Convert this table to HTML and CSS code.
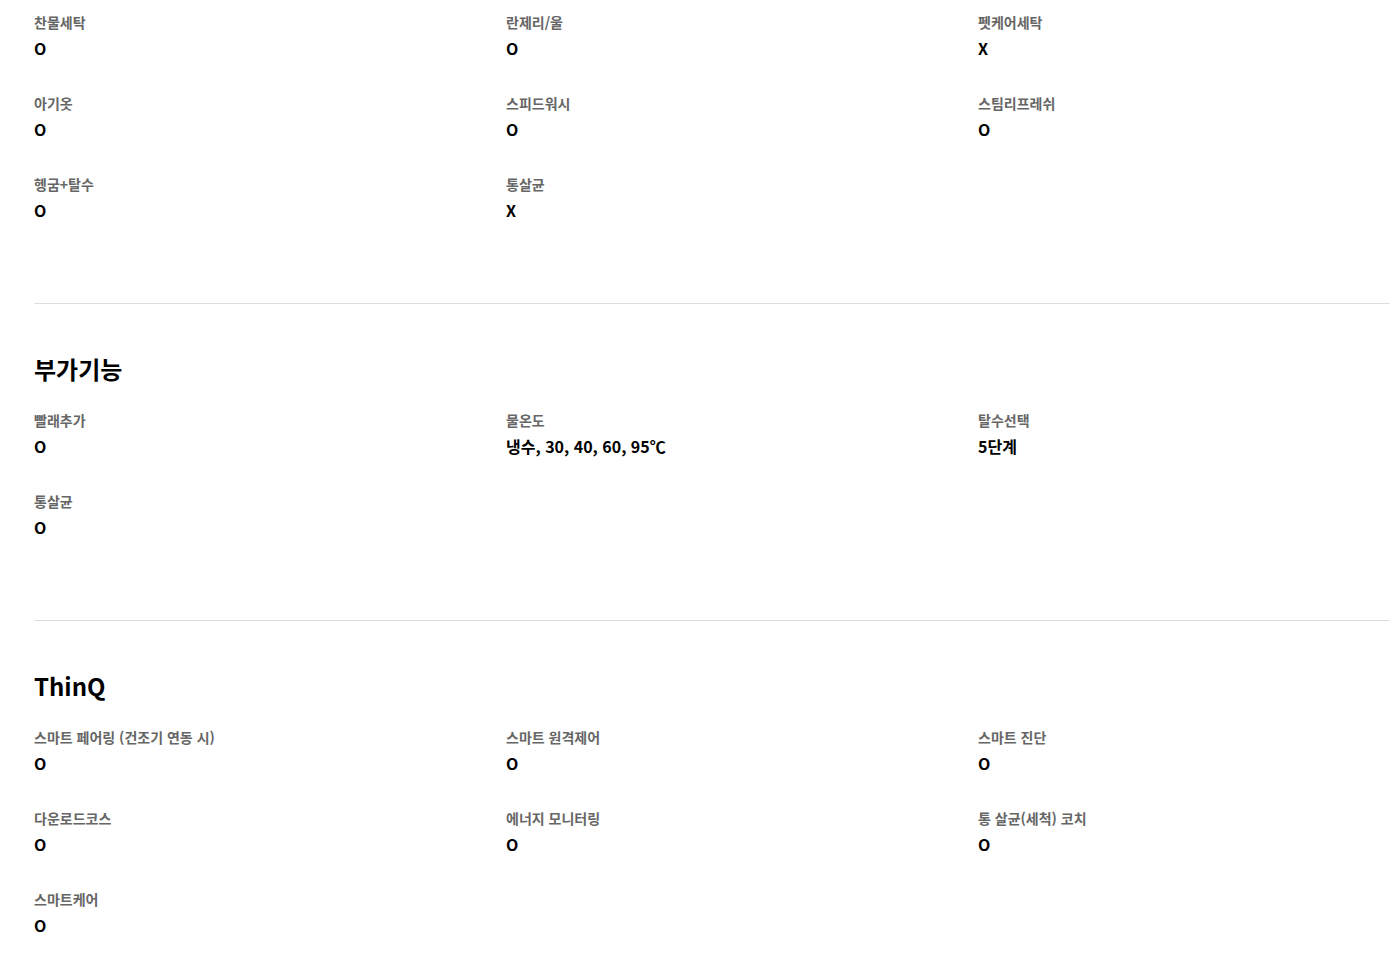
FILE: index.html
```html
<!DOCTYPE html>
<html lang="ko">
<head>
    <meta charset="UTF-8">
    <meta name="viewport" content="width=device-width, initial-scale=1.0">
    <title>제품 사양</title>
    <link rel="stylesheet" href="styles.css">
</head>
<body>
    <div class="spec">
        <!-- 세탁 코스 -->
        <section class="spec-section">
            <ul class="spec-list">
                <li><span class="name">찬물세탁</span><span class="value">O</span></li>
                <li><span class="name">란제리/울</span><span class="value">O</span></li>
                <li><span class="name">펫케어세탁</span><span class="value">X</span></li>
                <li><span class="name">아기옷</span><span class="value">O</span></li>
                <li><span class="name">스피드워시</span><span class="value">O</span></li>
                <li><span class="name">스팀리프레쉬</span><span class="value">O</span></li>
                <li><span class="name">헹굼+탈수</span><span class="value">O</span></li>
                <li><span class="name">통살균</span><span class="value">X</span></li>
            </ul>
        </section>

        <!-- 부가기능 -->
        <section class="spec-section">
            <h2>부가기능</h2>
            <ul class="spec-list">
                <li><span class="name">빨래추가</span><span class="value">O</span></li>
                <li><span class="name">물온도</span><span class="value">냉수, 30, 40, 60, 95℃</span></li>
                <li><span class="name">탈수선택</span><span class="value">5단계</span></li>
                <li><span class="name">통살균</span><span class="value">O</span></li>
            </ul>
        </section>

        <!-- ThinQ -->
        <section class="spec-section">
            <h2>ThinQ</h2>
            <ul class="spec-list">
                <li><span class="name">스마트 페어링 (건조기 연동 시)</span><span class="value">O</span></li>
                <li><span class="name">스마트 원격제어</span><span class="value">O</span></li>
                <li><span class="name">스마트 진단</span><span class="value">O</span></li>
                <li><span class="name">다운로드코스</span><span class="value">O</span></li>
                <li><span class="name">에너지 모니터링</span><span class="value">O</span></li>
                <li><span class="name">통 살균(세척) 코치</span><span class="value">O</span></li>
                <li><span class="name">스마트케어</span><span class="value">O</span></li>
            </ul>
        </section>
    </div>
</body>
</html>
```

FILE: styles.css
```css
* {
    margin: 0;
    padding: 0;
    box-sizing: border-box;
}

html, body {
    overflow-x: hidden;
}

body {
    font-family: "Noto Sans CJK KR", "Noto Sans", sans-serif;
    background: #fff;
    color: #000;
}

.spec {
    padding: 12px 0 0 34px;
}

.spec-section {
    padding-bottom: 81px;
    border-bottom: 1px solid #ddd;
    margin-bottom: 49px;
}

.spec-section h2 {
    font-size: 24px;
    line-height: 32px;
    font-weight: 700;
    color: #000;
    margin-bottom: 25px;
}

.spec-list {
    list-style: none;
    display: grid;
    grid-template-columns: repeat(3, 472px);
    row-gap: 33px;
}

.spec-list li {
    display: flex;
    flex-direction: column;
}

.name {
    font-size: 14px;
    line-height: 20px;
    font-weight: 600;
    color: #666;
}

.value {
    margin-top: 4px;
    font-size: 16px;
    line-height: 24px;
    font-weight: 700;
    color: #000;
}
```
